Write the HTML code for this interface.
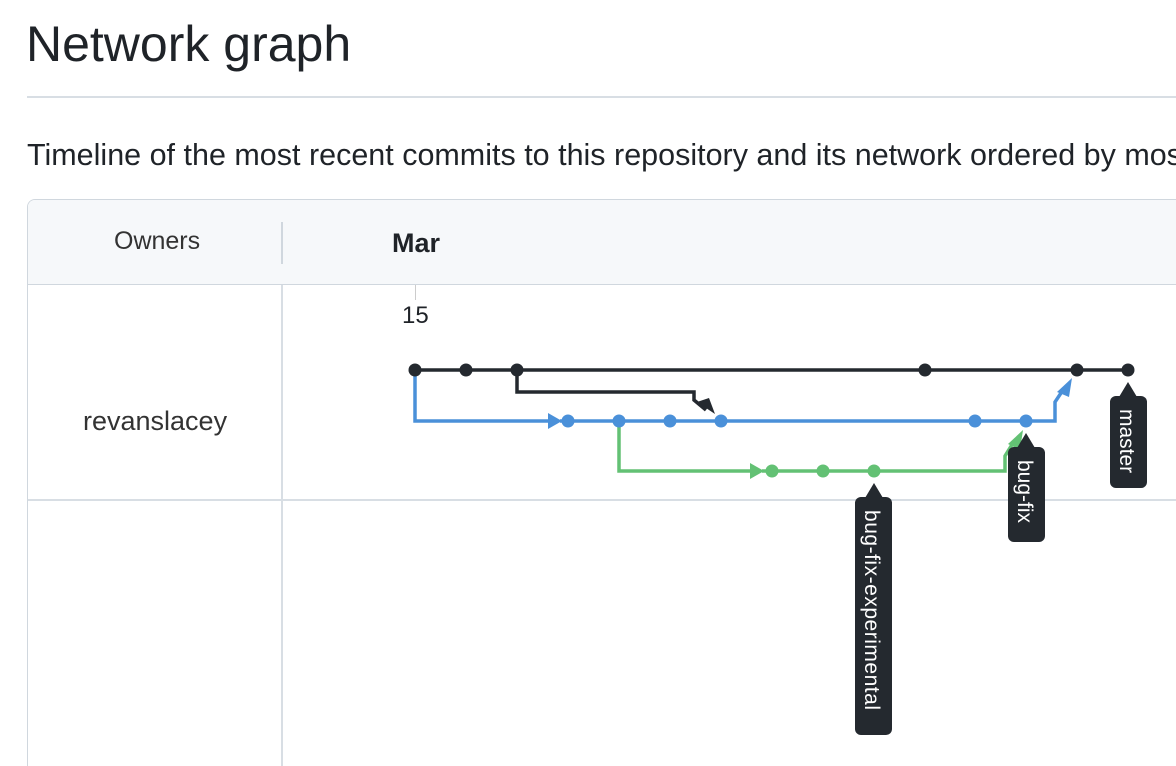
<!DOCTYPE html><html style="overflow:hidden;width:1176px;height:766px"><head><style>
body{margin:0;width:1176px;height:766px;overflow:hidden;background:#fff;font-family:"Liberation Sans",Arial,sans-serif;color:#1f2328;position:relative}
.a{position:absolute;white-space:nowrap}
</style></head><body>
<div class="a" style="left:26px;top:15px;font-size:50px">Network graph</div>
<div class="a" style="left:27px;top:96px;width:1149px;height:2px;background:#d8dee4"></div>
<div class="a" style="left:27px;top:138px;width:1149px;overflow:hidden;font-size:30.5px">Timeline of the most recent commits to this repository and its network ordered by most recent push date.</div>
<div class="a" style="left:27px;top:199px;width:1149px;height:567px;border:1px solid #d0d7de;border-right:none;border-bottom:none;border-radius:8px 0 0 0;box-sizing:border-box"></div>
<div class="a" style="left:28px;top:200px;width:1148px;height:84px;background:#f6f8fa;border-radius:7px 0 0 0;border-bottom:1px solid #d0d7de"></div>
<div class="a" style="left:281px;top:222px;width:2px;height:42px;background:#d0d7de"></div>
<div class="a" style="left:281px;top:285px;width:2px;height:481px;background:#d8dee4"></div>
<div class="a" style="left:28px;top:499px;width:1148px;height:2px;background:#d8dee4"></div>
<div class="a" style="left:114px;top:227px;font-size:25px;color:#333">Owners</div>
<div class="a" style="left:392px;top:228px;font-size:27px;font-weight:bold">Mar</div>
<div class="a" style="left:415px;top:285px;width:1px;height:15px;background:#ccc"></div>
<div class="a" style="left:402px;top:302px;font-size:24px">15</div>
<div class="a" style="left:83px;top:406px;font-size:27px;color:#333">revanslacey</div>
<svg class="a" style="left:0;top:0" width="1176" height="766">
<g fill="none" stroke-width="3.5">
<path d="M415 370H1128" stroke="#24292f"/>
<path d="M517 370V392H694V400L706 410" stroke="#24292f"/>
<path d="M415 370V421H550M560 421H1055V402L1063 390" stroke="#4a90d9"/>
<path d="M619 421V471H752M762 471H1005V456L1013 443" stroke="#63c174"/>
</g>
<path d="M697 402L715 414L709 398Z" fill="#24292f"/>
<path d="M548 413L562 421L548 429Z" fill="#4a90d9"/>
<path d="M1057 392L1072 378L1069 397Z" fill="#4a90d9"/>
<path d="M750 463L764 471L750 479Z" fill="#63c174"/>
<path d="M1008 444L1023 430L1020 450Z" fill="#63c174"/>
<g fill="#24292f"><circle cx="415" cy="370" r="6.5"/><circle cx="466" cy="370" r="6.5"/><circle cx="517" cy="370" r="6.5"/><circle cx="925" cy="370" r="6.5"/><circle cx="1077" cy="370" r="6.5"/><circle cx="1128" cy="370" r="6.5"/></g>
<g fill="#4a90d9"><circle cx="568" cy="421" r="6.5"/><circle cx="619" cy="421" r="6.5"/><circle cx="670" cy="421" r="6.5"/><circle cx="721" cy="421" r="6.5"/><circle cx="975" cy="421" r="6.5"/><circle cx="1026" cy="421" r="6.5"/></g>
<g fill="#63c174"><circle cx="772" cy="471" r="6.5"/><circle cx="823" cy="471" r="6.5"/><circle cx="874" cy="471" r="6.5"/></g>
<g fill="#24292f">
<path d="M1128 382L1137 397H1119Z"/><rect x="1110" y="396" width="37" height="92" rx="6"/>
<path d="M1026 433L1035 448H1017Z"/><rect x="1008" y="447" width="37" height="95" rx="6"/>
<path d="M874 483L883 498H865Z"/><rect x="855" y="497" width="37" height="238" rx="6"/>
</g>
<g fill="#fff" font-family="Liberation Sans,Arial,sans-serif" font-size="21">
<text transform="translate(1120,409) rotate(90)">master</text>
<text transform="translate(1018,460) rotate(90)">bug-fix</text>
<text transform="translate(865,510) rotate(90)" textLength="200">bug-fix-experimental</text>
</g>
</svg>
</body></html>
